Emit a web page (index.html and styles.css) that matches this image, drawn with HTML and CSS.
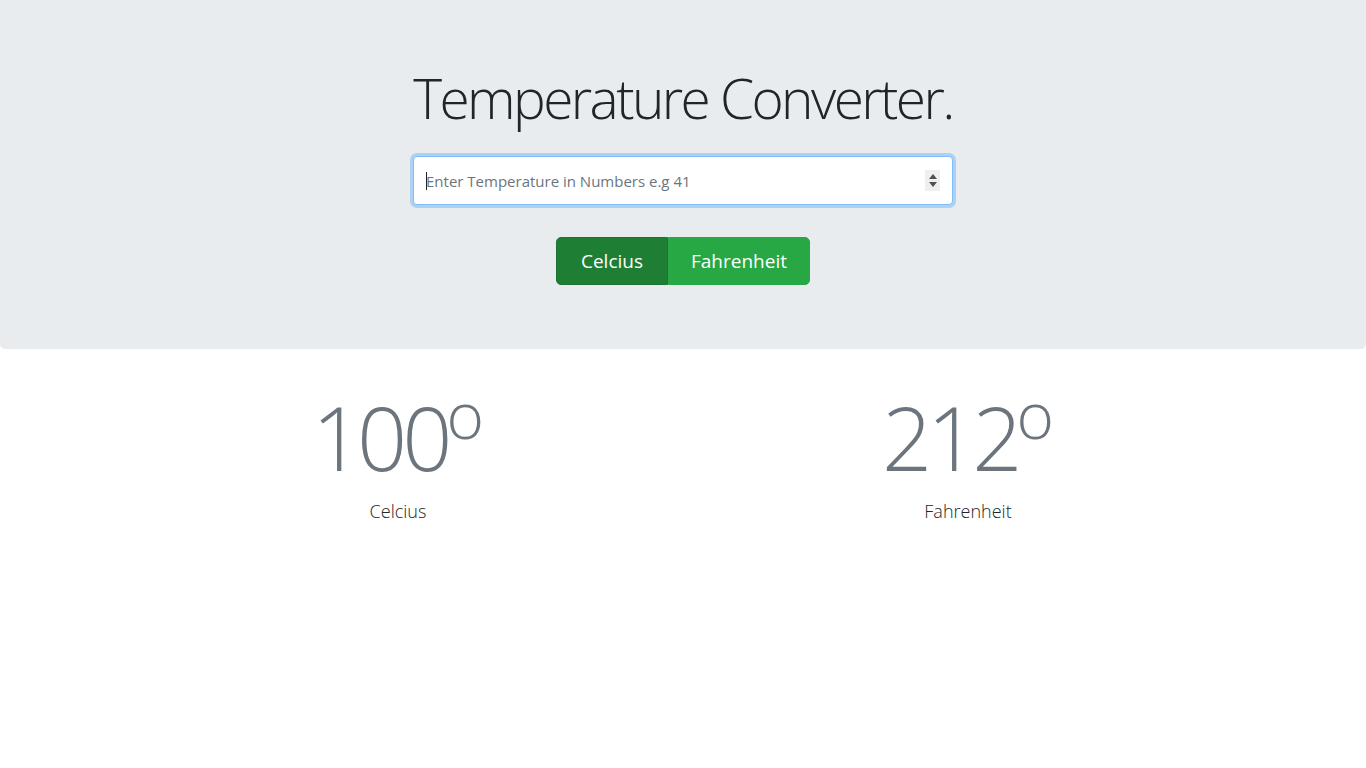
FILE: index.html
```html
<!DOCTYPE html>
<html lang="en">
<head>
<meta charset="utf-8">
<title>Temperature Converter</title>
<link rel="stylesheet" href="styles.css">
</head>
<body>
<header class="jumbotron">
  <h1 class="display">Temperature Converter.</h1>
  <div class="field">
    <input class="temp-input" type="text" placeholder="Enter Temperature in Numbers e.g 41">
    <span class="caret"></span>
    <span class="spinner"><span class="up"></span><span class="down"></span></span>
  </div>
  <div class="btn-group">
    <button class="btn btn-active">Celcius</button>
    <button class="btn">Fahrenheit</button>
  </div>
</header>
<main class="container">
  <div class="row">
    <div class="col">
      <div class="reading">100<sup>o</sup></div>
      <p class="lead">Celcius</p>
    </div>
    <div class="col">
      <div class="reading">212<sup>o</sup></div>
      <p class="lead">Fahrenheit</p>
    </div>
  </div>
</main>
</body>
</html>
```

FILE: styles.css
```css
* { box-sizing: border-box; }
body {
  margin: 0;
  font-family: "Open Sans", "Noto Sans", sans-serif;
  color: #212529;
  background: #fff;
}
.jumbotron {
  background: #e9ecef;
  padding: 64px 32px;
  border-radius: 0 0 5px 5px;
  display: flex;
  flex-direction: column;
  align-items: center;
}
.display {
  font-size: 55px;
  font-weight: 300;
  line-height: 67px;
  margin: 0;
  letter-spacing: -2.6px;
  color: #212529;
}
.field {
  position: relative;
  width: 540px;
  margin-top: 25px;
}
.temp-input {
  display: block;
  width: 100%;
  height: 49px;
  padding: 0 12px;
  font-family: inherit;
  font-size: 15px;
  color: #495057;
  background: #fff;
  border: 1px solid #80bdff;
  border-radius: 4px;
  box-shadow: 0 0 0 3px rgba(0, 123, 255, 0.25);
  outline: none;
}
.temp-input::placeholder { color: #6c757d; opacity: 1; }
.caret {
  position: absolute;
  left: 13px;
  top: 16px;
  width: 1px;
  height: 18px;
  background: #212529;
}
.spinner {
  position: absolute;
  right: 13px;
  top: 14px;
  width: 15px;
  height: 21px;
  background: #efefef;
  display: flex;
  flex-direction: column;
  align-items: center;
  justify-content: center;
  gap: 3px;
}
.spinner .up {
  width: 0; height: 0;
  border-left: 4px solid transparent;
  border-right: 4px solid transparent;
  border-bottom: 5px solid #505050;
}
.spinner .down {
  width: 0; height: 0;
  border-left: 4px solid transparent;
  border-right: 4px solid transparent;
  border-top: 5px solid #505050;
}
.btn-group {
  display: flex;
  margin-top: 32px;
}
.btn {
  height: 48px;
  width: 142px;
  font-family: inherit;
  font-size: 19px;
  color: #fff;
  background: #28a745;
  border: 1px solid #28a745;
  border-radius: 0 5px 5px 0;
  padding: 0;
}
.btn-active {
  width: 112px;
  background: #1e7e34;
  border-color: #1c7430;
  border-radius: 5px 0 0 5px;
}
.container {
  max-width: 1140px;
  margin: 36px auto 0;
  padding: 0 15px;
}
.row {
  display: flex;
  margin: 0 -15px;
}
.col {
  flex: 1 1 50%;
  padding: 0 15px;
  text-align: center;
}
.reading {
  font-size: 88px;
  font-weight: 300;
  line-height: 104px;
  color: #6c757d;
  letter-spacing: -5px;
}
.reading sup {
  font-size: 64px;
  line-height: 0;
  position: relative;
  vertical-align: baseline;
  top: -0.5em;
  letter-spacing: 0;
  margin-left: -1px;
}
.lead {
  font-size: 18px;
  font-weight: 300;
  line-height: 24px;
  margin: 10px 0 0;
  color: #212529;
}
```
